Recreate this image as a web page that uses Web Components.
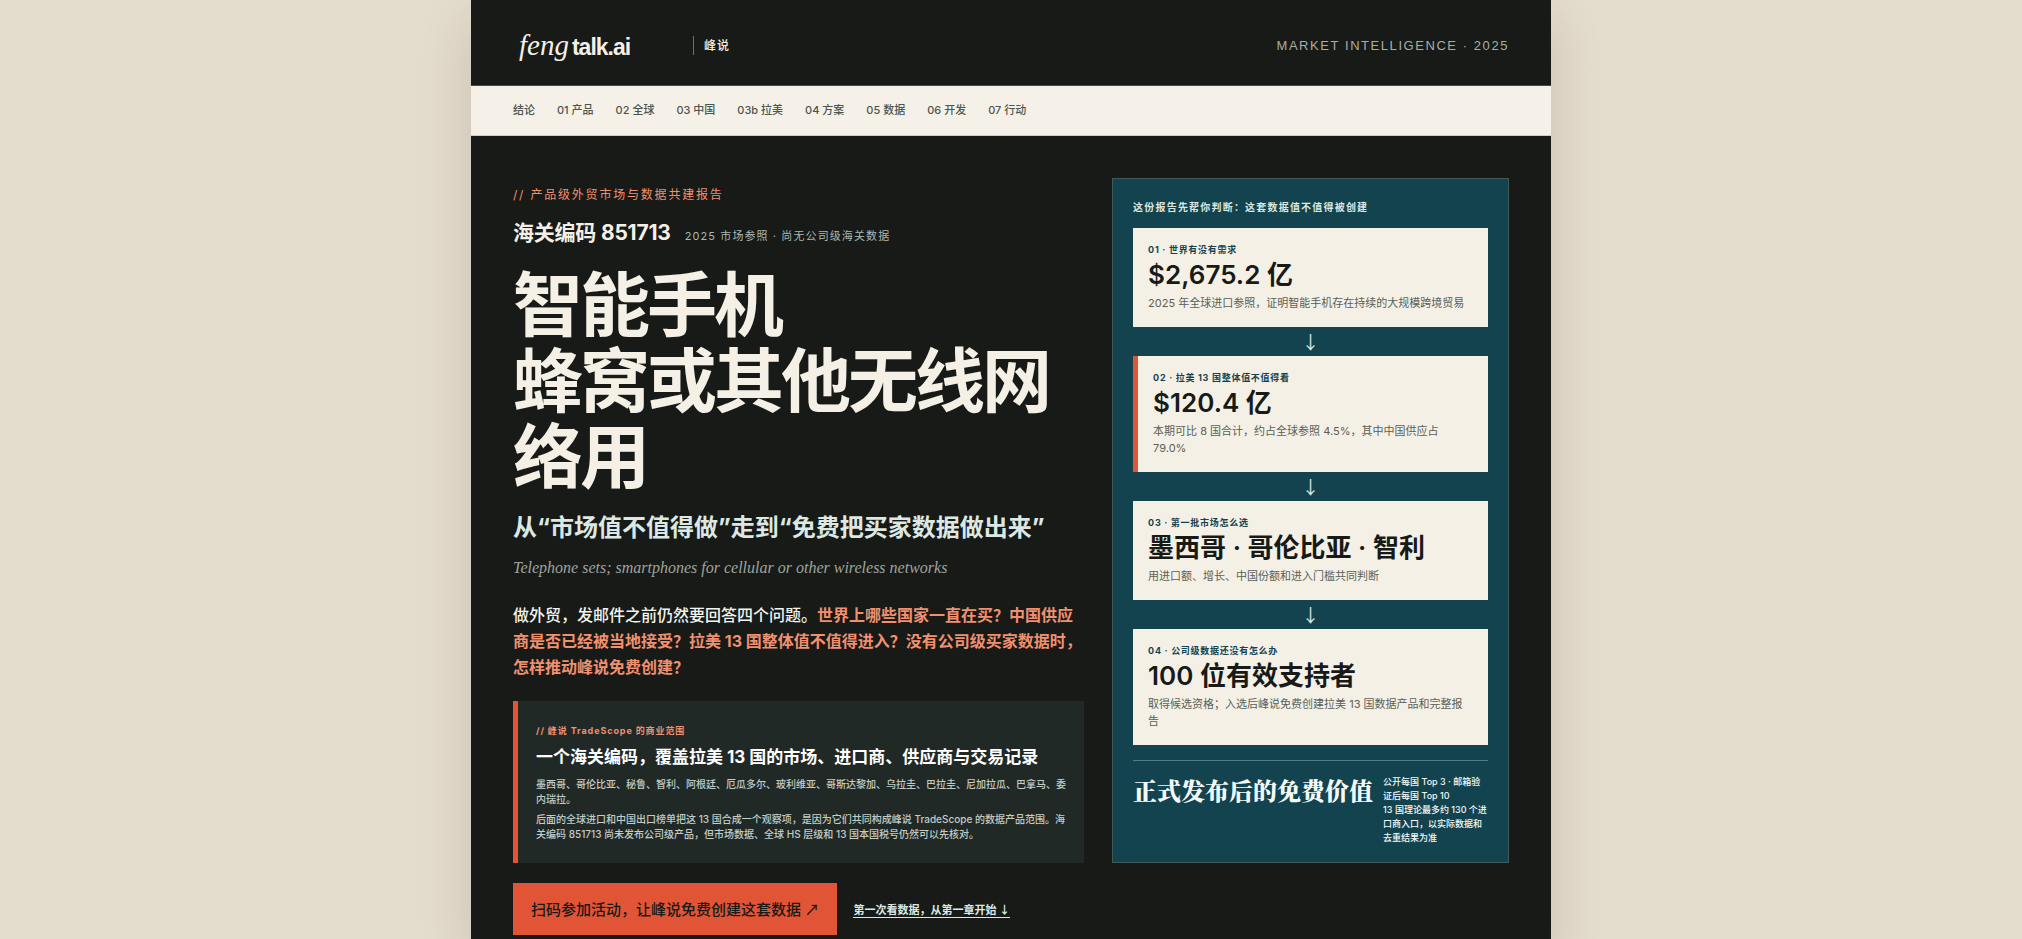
<!DOCTYPE html>
<html lang="zh-CN">
<head>
<meta charset="utf-8">
<meta name="viewport" content="width=device-width, initial-scale=1">
<title>fengtalk.ai 峰说 · 海关编码 851713</title>
<style>
  :root {
    --ink: #171a17;
    --paper: #f4f0e6;
    --teal: #12434f;
    --orange: #e15436;
    --salmon: #f0906f;
    --mint: #dbe8e3;
    --gutter: 42px;
  }
  body {
    margin: 0;
    background: #e4dccc;
    font-family: Inter, "Noto Sans CJK SC", sans-serif;
    color: var(--paper);
  }
</style>
</head>
<body>
<report-page>
  <site-header>
    <span slot="mark">峰说</span>
    <span slot="meta">MARKET INTELLIGENCE · 2025</span>
  </site-header>
  <section-nav></section-nav>
  <report-hero>
    <hero-intro slot="intro">
      <span slot="kicker">// 产品级外贸市场与数据共建报告</span>
      <span slot="code">海关编码 851713</span>
      <span slot="status">2025 市场参照 · 尚无公司级海关数据</span>
      <span slot="title">智能手机<br>蜂窝或其他无线网络用</span>
      <span slot="subtitle">从“市场值不值得做”走到“免费把买家数据做出来”</span>
      <span slot="english">Telephone sets; smartphones for cellular or other wireless networks</span>
      <span slot="lead">做外贸，发邮件之前仍然要回答四个问题。</span>
      <span slot="questions">世界上哪些国家一直在买？中国供应商是否已经被当地接受？拉美 13 国整体值不值得进入？没有公司级买家数据时，怎样推动峰说免费创建？</span>
    </hero-intro>
    <scope-note slot="intro">
      <span slot="label">// 峰说 TradeScope 的商业范围</span>
      <span slot="title">一个海关编码，覆盖拉美 13 国的市场、进口商、供应商与交易记录</span>
      <span slot="countries">墨西哥、哥伦比亚、秘鲁、智利、阿根廷、厄瓜多尔、玻利维亚、哥斯达黎加、乌拉圭、巴拉圭、尼加拉瓜、巴拿马、委内瑞拉。</span>
      <span slot="detail">后面的全球进口和中国出口榜单把这 13 国合成一个观察项，是因为它们共同构成峰说 TradeScope 的数据产品范围。海关编码 851713 尚未发布公司级产品，但市场数据、全球 HS 层级和 13 国本国税号仍然可以先核对。</span>
    </scope-note>
    <decision-panel slot="panel">
      <span slot="title">这份报告先帮你判断：这套数据值不值得被创建</span>
      <step-card>
        <span slot="label">01 · 世界有没有需求</span>
        <span slot="value">$2,675.2 亿</span>
        2025 年全球进口参照，证明智能手机存在持续的大规模跨境贸易
      </step-card>
      <step-card linked accent>
        <span slot="label">02 · 拉美 13 国整体值不值得看</span>
        <span slot="value">$120.4 亿</span>
        本期可比 8 国合计，约占全球参照 4.5%，其中中国供应占 79.0%
      </step-card>
      <step-card linked>
        <span slot="label">03 · 第一批市场怎么选</span>
        <span slot="value">墨西哥 · 哥伦比亚 · 智利</span>
        用进口额、增长、中国份额和进入门槛共同判断
      </step-card>
      <step-card linked>
        <span slot="label">04 · 公司级数据还没有怎么办</span>
        <span slot="value">100 位有效支持者</span>
        取得候选资格；入选后峰说免费创建拉美 13 国数据产品和完整报告
      </step-card>
      <span slot="value">正式发布后的免费价值</span>
      <span slot="terms">公开每国 Top 3 · 邮箱验证后每国 Top 10<br>13 国理论最多约 130 个进口商入口，以实际数据和去重结果为准</span>
    </decision-panel>
    <hero-actions slot="actions"></hero-actions>
  </report-hero>
</report-page>

<script>
  const define = (name, html) => {
    const template = document.createElement('template');
    template.innerHTML = html;
    customElements.define(name, class extends HTMLElement {
      constructor() {
        super();
        this.attachShadow({ mode: 'open' }).append(template.content.cloneNode(true));
      }
    });
  };

  define('report-page', `
    <style>
      :host { display: block; box-sizing: border-box; max-width: 1080px; min-height: 100vh;
              margin: 0 auto; background: var(--ink); box-shadow: 0 20px 50px rgba(40, 35, 20, .14); }
    </style>
    <slot></slot>`);

  define('site-header', `
    <style>
      :host { display: block; border-bottom: 1px solid #4d4741; }
      header { display: flex; align-items: center; justify-content: space-between;
               padding: 35px var(--gutter) 29px; line-height: 21px; }
      .brand { display: flex; align-items: center; }
      .logo { display: flex; align-items: baseline; gap: 3px; width: 180px; height: 21px; padding-left: 6px;
              box-sizing: border-box; color: var(--paper); text-decoration: none; }
      .logo i { font: italic 29px/21px "Liberation Serif", serif; }
      .logo b { font: 700 23px/21px "Liberation Sans", sans-serif; letter-spacing: -1px; }
      .mark { border-left: 1px solid #6d706a; padding-left: 10px; font-size: 12px;
              line-height: 19px; letter-spacing: 1px; font-weight: 500; }
      .meta { font-family: "Liberation Sans", sans-serif; font-size: 13px; letter-spacing: .12em; color: #a9ada6; }
    </style>
    <header>
      <div class="brand">
        <a class="logo" href="#"><i>feng</i><b>talk.ai</b></a>
        <span class="mark"><slot name="mark"></slot></span>
      </div>
      <span class="meta"><slot name="meta"></slot></span>
    </header>`);

  define('section-nav', `
    <style>
      :host { display: block; background: #f6f1e8; border-bottom: 1px solid #cfccc2; }
      nav { display: flex; flex-wrap: wrap; gap: 0 22px; padding: 16px var(--gutter); }
      a { color: #4c554e; font-size: 11px; line-height: 17px; font-weight: 500; text-decoration: none; }
    </style>
    <nav>
      <a href="#summary">结论</a>
      <a href="#s01">01 产品</a>
      <a href="#s02">02 全球</a>
      <a href="#s03">03 中国</a>
      <a href="#s03b">03b 拉美</a>
      <a href="#s04">04 方案</a>
      <a href="#s05">05 数据</a>
      <a href="#s06">06 开发</a>
      <a href="#s07">07 行动</a>
    </nav>`);

  define('report-hero', `
    <style>
      :host { display: block; padding: 42px var(--gutter) 0; }
      .columns { display: grid; grid-template-columns: minmax(0, 59fr) minmax(0, 41fr); gap: 28px; }
      .intro { display: flex; flex-direction: column; justify-content: space-between; gap: 20px; }
      .actions { margin-top: 20px; }
    </style>
    <section>
      <div class="columns">
        <div class="intro"><slot name="intro"></slot></div>
        <slot name="panel"></slot>
      </div>
      <div class="actions"><slot name="actions"></slot></div>
    </section>`);

  define('hero-intro', `
    <style>
      :host { display: block; padding-top: 8px; }
      p, h1, h2 { margin: 0; }
      .kicker { font-size: 12px; line-height: 18px; letter-spacing: .15em; color: var(--salmon); }
      .code { display: flex; align-items: baseline; gap: 14px; margin-top: 14px; line-height: 30px; }
      .code strong { font-size: 21px; letter-spacing: -.01em; }
      .code span { font-size: 11px; letter-spacing: .1em; color: #a9b8b2; }
      h1 { margin-top: 18px; font: 700 70px/76px "Liberation Sans", "Noto Sans CJK SC", sans-serif; letter-spacing: -3px; }
      h2 { margin-top: 13px; font-size: 24px; line-height: 36px; font-weight: 700; color: var(--mint); }
      .english { margin-top: 10px; font: italic 16px/24px "Liberation Serif", serif; color: #9fa49d; }
      .lead { margin-top: 22px; font-size: 16px; line-height: 26px; font-weight: 500; color: #f2f4ee; }
      .lead strong { color: var(--salmon); }
    </style>
    <p class="kicker"><slot name="kicker"></slot></p>
    <p class="code"><strong><slot name="code"></slot></strong><span><slot name="status"></slot></span></p>
    <h1><slot name="title"></slot></h1>
    <h2><slot name="subtitle"></slot></h2>
    <p class="english" lang="en"><slot name="english"></slot></p>
    <p class="lead"><slot name="lead"></slot><strong><slot name="questions"></slot></strong></p>`);

  define('scope-note', `
    <style>
      :host { display: block; padding: 22px 18px 21px; border-left: 5px solid var(--orange); background: #212926; }
      p, h3 { margin: 0; }
      .label { font-size: 9px; line-height: 16px; letter-spacing: .1em; font-weight: 700; color: var(--salmon); }
      h3 { margin: 6px 0 8px; font-size: 17px; line-height: 24px; color: #fff; }
      .body { font-size: 10px; line-height: 15px; font-weight: 500; color: #c3cdc8; }
      .body + .body { margin-top: 5px; }
    </style>
    <p class="label"><slot name="label"></slot></p>
    <h3><slot name="title"></slot></h3>
    <p class="body"><slot name="countries"></slot></p>
    <p class="body"><slot name="detail"></slot></p>`);

  define('decision-panel', `
    <style>
      :host { display: block; padding: 20px 20px 17px; border: 1px solid #3f5a58; background: var(--teal); }
      h2 { margin: 0 0 13px; font-size: 10px; line-height: 16px; letter-spacing: .12em; color: var(--mint); }
      footer { display: flex; align-items: flex-start; gap: 10px; margin-top: 15px; padding-top: 14px;
               border-top: 1px solid #4f7c85; color: #f4fafa; }
      strong { flex: none; font: 900 24px/34px "Liberation Serif", "Noto Serif CJK SC", "Noto Sans CJK SC", serif; }
      .terms { flex: 1; font-size: 9px; line-height: 14px; font-weight: 500; }
    </style>
    <h2><slot name="title"></slot></h2>
    <slot></slot>
    <footer>
      <strong><slot name="value"></slot></strong>
      <span class="terms"><slot name="terms"></slot></span>
    </footer>`);

  define('step-card', `
    <style>
      :host { display: block; color: var(--ink); }
      .arrow { display: none; height: 29px; font: 400 18px/29px "Noto Sans CJK SC", sans-serif;
               text-align: center; color: var(--mint); }
      :host([linked]) .arrow { display: block; }
      article { padding: 14px 15px 15px; background: var(--paper); }
      :host([accent]) article { border-left: 5px solid var(--orange); }
      p { margin: 0; }
      .label { font-size: 9px; line-height: 16px; letter-spacing: .08em; font-weight: 700; color: var(--teal); }
      .value { font-size: 26px; line-height: 34px; font-weight: 600; }
      .note { margin-top: 3px; font-size: 11px; line-height: 17px; color: #5a5f58; }
    </style>
    <div class="arrow" aria-hidden="true">↓</div>
    <article>
      <p class="label"><slot name="label"></slot></p>
      <p class="value"><slot name="value"></slot></p>
      <p class="note"><slot></slot></p>
    </article>`);

  define('hero-actions', `
    <style>
      :host { display: flex; flex-wrap: wrap; align-items: center; gap: 16px;
              font-family: "Noto Sans CJK SC", sans-serif; }
      .join { padding: 14px 18px; background: var(--orange); color: var(--ink);
              font-size: 15px; line-height: 24px; font-weight: 500; text-decoration: none; }
      .start { border-bottom: 1px solid var(--mint); color: var(--mint);
               font-size: 11px; line-height: 16px; font-weight: 700; text-decoration: none; }
    </style>
    <a class="join" href="#join">扫码参加活动，让峰说免费创建这套数据 ↗</a>
    <a class="start" href="#s01">第一次看数据，从第一章开始 ↓</a>`);
</script>
</body>
</html>
